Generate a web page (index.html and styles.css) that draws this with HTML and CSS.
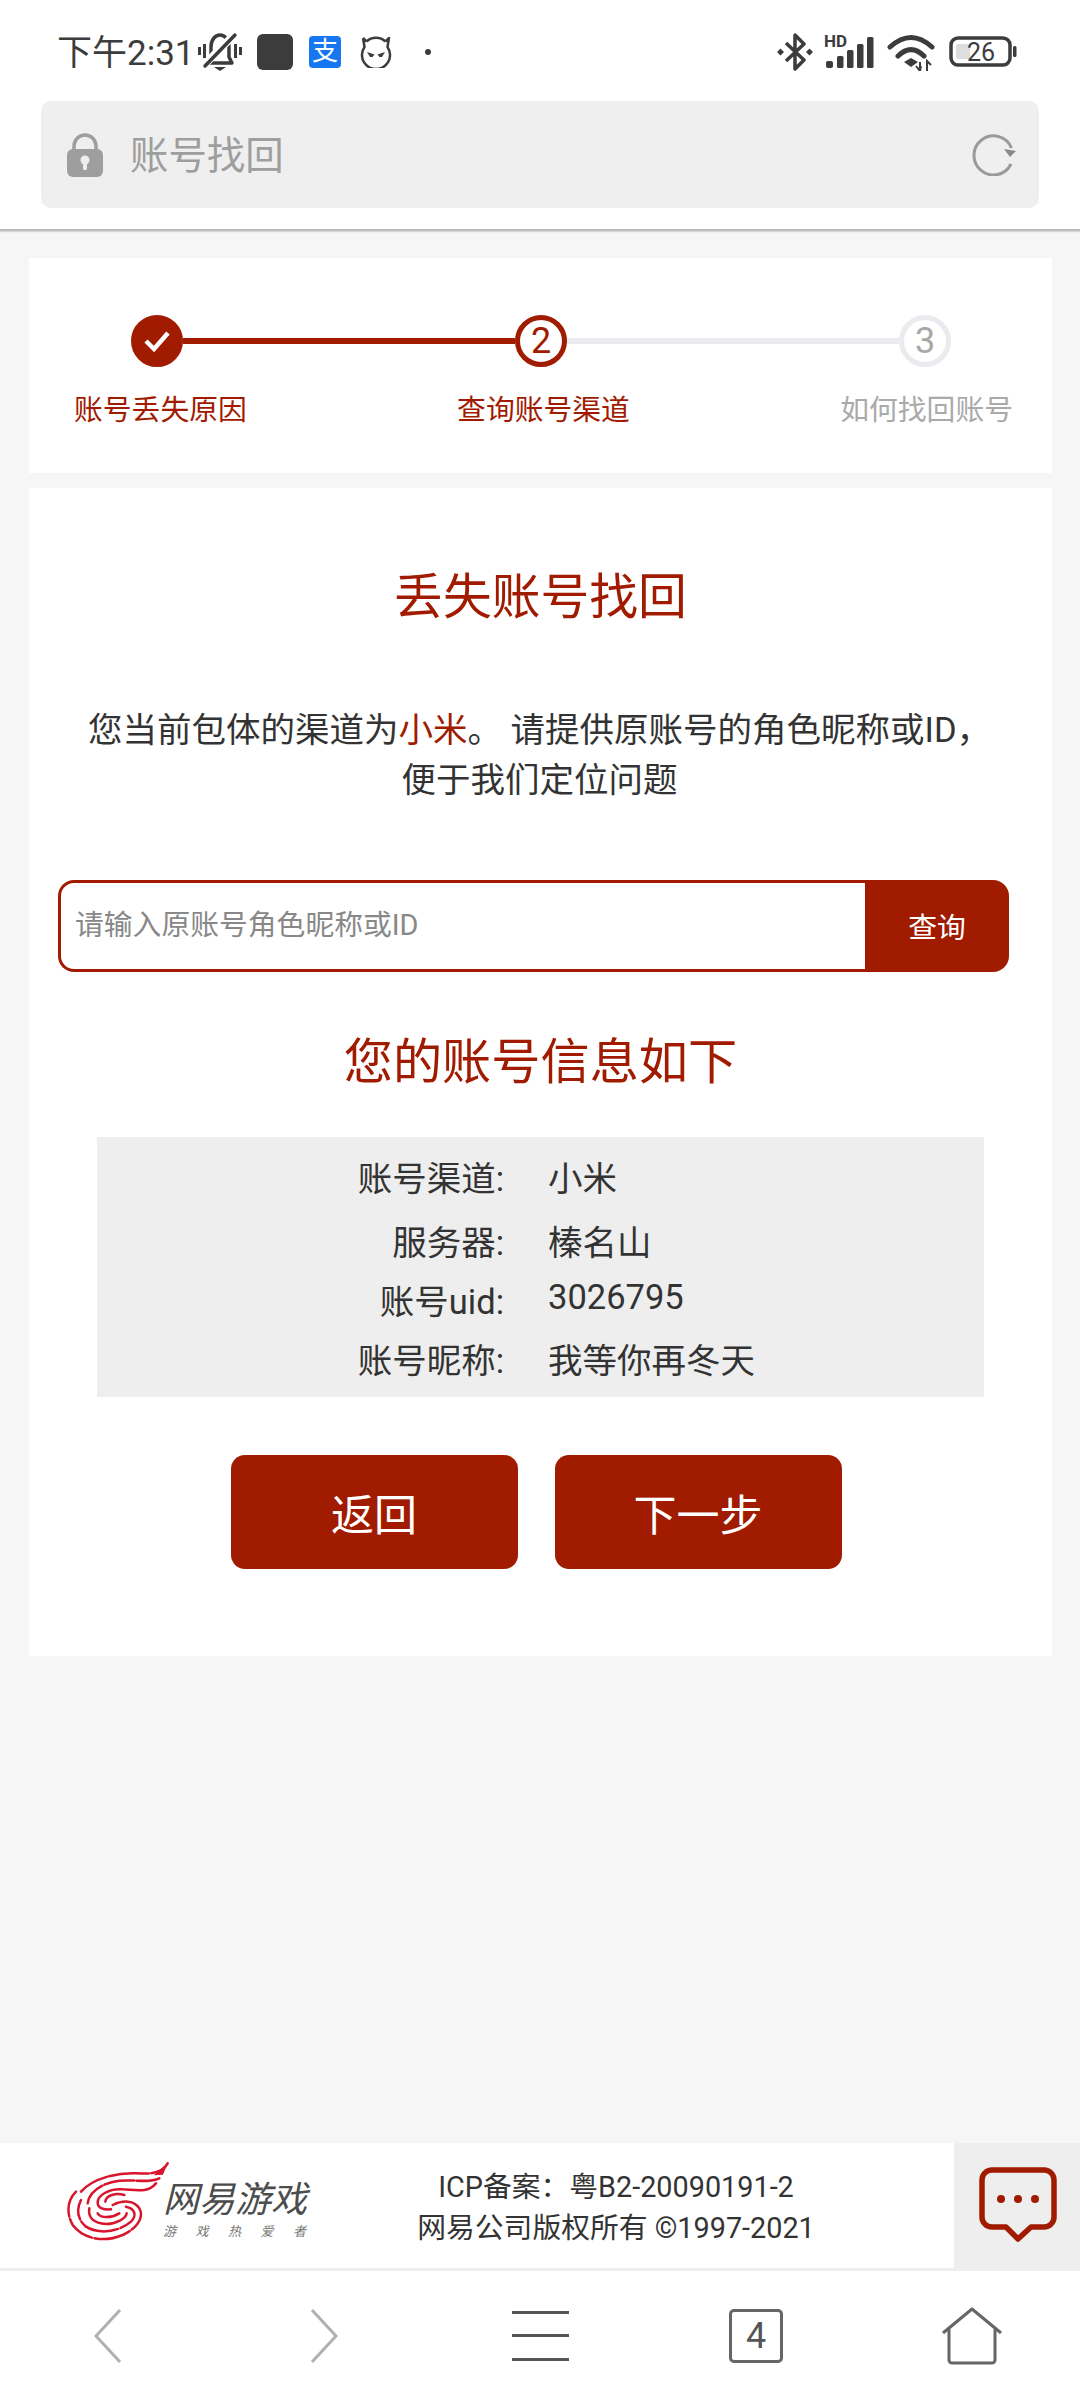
FILE: index.html
```html
<!DOCTYPE html>
<html lang="zh-CN">
<head>
<meta charset="utf-8">
<title>账号找回</title>
<link rel="stylesheet" href="styles.css">
</head>
<body>
<div class="page">
  <header class="header">
    <div class="status">
      <div class="status-left">
        <span class="time">下午2:31</span>
        <svg class="i-bell" viewBox="0 0 44 40"><g fill="none" stroke="#3c3c3c" stroke-width="3.5" stroke-linejoin="round"><path d="M10 31l3-6V15C13 8 17 3 22 3s9 5 9 12v10l3 6z"/></g><path d="M6 33L36 3" stroke="#fff" stroke-width="8"/><path d="M7 34L37 3" stroke="#3c3c3c" stroke-width="3.5" stroke-linecap="round"/><path d="M16 35h12l-6 4z" fill="#3c3c3c"/><path d="M1.500 15v8M6.500 12v14M37.500 12v14M42.500 15v8" stroke="#3c3c3c" stroke-width="3"/></svg>
        <span class="i-square"></span>
        <span class="i-alipay">支</span>
        <svg class="i-devil" viewBox="0 0 32 32"><path d="M3 2l1.500 9A14 14 0 1 0 27.500 11L29 2l-3.500 3.500M3 2l3.500 3.500" fill="none" stroke="#3c3c3c" stroke-width="2.500" stroke-linejoin="round"/><path d="M6.500 5.500a14 14 0 0 1 19 0" fill="none" stroke="#3c3c3c" stroke-width="2.500"/><path d="M7 16l7.500 2.500-2 2.500h-2.500zM25 16l-7.500 2.500 2 2.500h2.500z" fill="#3c3c3c"/></svg>
        <span class="i-dot"></span>
      </div>
      <div class="status-right">
        <svg class="i-bt" viewBox="0 0 36 38"><path d="M9 10l18 17-9 9V2l9 9L9 28" fill="none" stroke="#3c3c3c" stroke-width="3.500" stroke-linejoin="round"/><path d="M3.500 15.500l3.500 3.500-3.500 3.500L0 19zM32.500 15.500l3.500 3.500-3.500 3.500L29 19z" fill="#3c3c3c"/></svg>
        <svg class="i-signal" viewBox="0 0 50 40"><text x="0" y="15" class="hd">HD</text><rect x="2" y="29" width="7" height="7" rx="2" fill="#3c3c3c"/><rect x="13" y="24" width="6.500" height="12" rx="1.500" fill="#3c3c3c"/><rect x="23" y="18" width="6.500" height="18" rx="1.500" fill="#3c3c3c"/><rect x="33" y="12" width="6.500" height="24" rx="1.500" fill="#3c3c3c"/><rect x="43" y="5" width="6.500" height="31" rx="1.500" fill="#3c3c3c"/></svg>
        <svg class="i-wifi" viewBox="0 0 48 38"><path d="M3 14Q24-5 45 14M11 23Q24 10 37 23" fill="none" stroke="#3c3c3c" stroke-width="5" stroke-linecap="round"/><path d="M17 29l7-4 7 4-7 5z" fill="#3c3c3c"/><path d="M33 38V29M29 33l4 5 1-5M40 38V28l4 4" fill="none" stroke="#3c3c3c" stroke-width="2"/></svg>
        <svg class="i-battery" viewBox="0 0 68 32"><rect x="2" y="2" width="59" height="27" rx="7" fill="none" stroke="#3c3c3c" stroke-width="3.500"/><rect x="7" y="8" width="14" height="15" rx="2" fill="#dedede"/><text x="32" y="25" text-anchor="middle" class="batt">26</text><rect x="64" y="10" width="3.500" height="11" rx="1.500" fill="#3c3c3c"/></svg>
      </div>
    </div>
    <div class="address">
      <svg class="i-lock" viewBox="0 0 36 44"><path d="M7 20v-7a11 11 0 0 1 22 0v7" fill="none" stroke="#9e9e9e" stroke-width="3.500"/><rect y="16" width="36" height="28" rx="6" fill="#9e9e9e"/><circle cx="18" cy="27" r="4.500" fill="#eee"/><rect x="16" y="27" width="4" height="10" rx="1.500" fill="#eee"/></svg>
      <span class="address-text">账号找回</span>
      <svg class="i-reload" viewBox="0 0 44 42"><path d="M39 30A19.500 19.500 0 1 1 39.500 14" fill="none" stroke="#9a9a9a" stroke-width="3"/><path d="M32 15l12 2-6 6z" fill="#8a8a8a"/></svg>
    </div>
  </header>

  <main class="content">
    <section class="steps">
      <div class="track">
        <span class="dot dot-done"><svg class="i-check" viewBox="0 0 28 24"><path d="M3 12l8 8L25 4" fill="none" stroke="#fff" stroke-width="4.500"/></svg></span>
        <span class="bar bar-on"></span>
        <span class="dot dot-now">2</span>
        <span class="bar"></span>
        <span class="dot dot-next">3</span>
      </div>
      <div class="labels">
        <span class="label label-on">账号丢失原因</span>
        <span class="label label-on">查询账号渠道</span>
        <span class="label">如何找回账号</span>
      </div>
    </section>

    <section class="card">
      <h1 class="title">丢失账号找回</h1>
      <p class="desc">您当前包体的渠道为<em class="hl">小米</em>。 请提供原账号的角色昵称或ID，<br>便于我们定位问题</p>
      <form class="search">
        <input class="search-input" type="text" placeholder="请输入原账号角色昵称或ID">
        <button class="search-btn" type="button">查询</button>
      </form>
      <h2 class="subtitle">您的账号信息如下</h2>
      <dl class="info">
        <div class="info-row"><dt>账号渠道:</dt><dd>小米</dd></div>
        <div class="info-row"><dt>服务器:</dt><dd>榛名山</dd></div>
        <div class="info-row info-num"><dt>账号uid:</dt><dd>3026795</dd></div>
        <div class="info-row"><dt>账号昵称:</dt><dd>我等你再冬天</dd></div>
      </dl>
      <div class="actions">
        <button class="action" type="button">返回</button>
        <button class="action" type="button">下一步</button>
      </div>
    </section>
  </main>

  <footer class="footer">
    <div class="logo">
      <svg class="logo-mark" viewBox="0 0 104 84"><g transform="translate(-9 -12) scale(.3333)" fill="none" stroke="#d8152c" stroke-width="7.500" stroke-linecap="round">
        <path d="M335 40C318 72 280 72 240 70 180 68 110 85 75 125" stroke-dasharray="60 7 120 7 200 0"/>
        <path d="M310 85C280 100 240 88 190 92 140 98 100 125 95 160" stroke-dasharray="70 7 90 7 200 0"/>
        <path d="M300 100C275 130 240 120 200 118 160 115 125 135 125 158 125 175 145 180 165 178"/>
        <path d="M148 155C150 135 180 128 205 135"/>
        <path d="M60 125C35 150 30 190 50 225 80 265 140 280 200 255 245 235 265 200 250 175 235 150 200 150 170 165" stroke-dasharray="80 8 90 8 110 8 300 0"/>
        <path d="M75 150C60 180 65 210 90 230 130 255 190 245 225 215 245 195 235 175 210 170" stroke-dasharray="60 8 120 8 300 0"/>
        <path d="M100 175C95 205 115 220 150 222 180 222 210 205 212 190"/>
        <path d="M125 190C135 205 165 205 190 190"/>
        <path d="M335 40l-14 34-28 2z" fill="#d8152c" stroke="none"/>
      </g></svg>
      <div class="logo-text">
        <span class="logo-name">网易游戏</span>
        <span class="logo-sub"><i>游</i><i>戏</i><i>热</i><i>爱</i><i>者</i></span>
      </div>
    </div>
    <div class="copy">
      <p>ICP备案：粤B2-20090191-2</p>
      <p>网易公司版权所有 ©1997-2021</p>
    </div>
    <div class="chat">
      <svg class="i-chat" viewBox="0 0 78 75"><path d="M13 3h52a10 10 0 0 1 10 10v37a10 10 0 0 1-10 10H52L39 72 27 60H13A10 10 0 0 1 3 50V13A10 10 0 0 1 13 3z" fill="none" stroke="#a11b00" stroke-width="5.500" stroke-linejoin="round"/><circle cx="22" cy="32" r="4" fill="#a11b00"/><circle cx="39" cy="32" r="4" fill="#a11b00"/><circle cx="56" cy="32" r="4" fill="#a11b00"/></svg>
    </div>
  </footer>

  <nav class="nav">
    <svg class="i-chev" viewBox="0 0 28 54"><path d="M26 1L2 27l24 26" fill="none" stroke="#b0b0b0" stroke-width="3"/></svg>
    <svg class="i-chev" viewBox="0 0 28 54"><path d="M2 1l24 26L2 53" fill="none" stroke="#b0b0b0" stroke-width="3"/></svg>
    <span class="menu"><i></i><i></i><i></i></span>
    <span class="tabs">4</span>
    <svg class="i-home" viewBox="0 0 62 58"><path d="M2 26L31 2l29 24M8 22v31a3 3 0 0 0 3 3h40a3 3 0 0 0 3-3V22" fill="none" stroke="#666" stroke-width="3" stroke-linejoin="round"/></svg>
  </nav>
</div>
</body>
</html>
```
FILE: styles.css
```css
* { box-sizing: border-box; }
html, body { margin: 0; padding: 0; }
body {
  font-family: Roboto, "Noto Sans CJK SC", sans-serif;
  color: #333;
  background: #f6f6f6;
}
p, h1, h2, dl, dd { margin: 0; }
.page { width: 1080px; height: 2400px; display: flex; flex-direction: column; }

/* header */
.header { background: #fff; height: 231px; border-bottom: 2px solid #bdbdbd; box-shadow: 0 1px 1px #d8d8d8; }
.status { height: 101px; padding: 3px 63px 0 57px; display: flex; justify-content: space-between; align-items: center; }
.status-left, .status-right { display: flex; align-items: center; }
.time { font-size: 35px; color: #3c3c3c; width: 141px; white-space: nowrap; line-height: 40px; padding-top: 3px; height: 43px; }
.i-bell { width: 44px; height: 40px; }
.i-square { width: 36px; height: 36px; background: #3c3c3c; border-radius: 6px; margin-left: 15px; }
.i-alipay { width: 32px; height: 32px; background: #1677f0; border-radius: 4px; margin-left: 16px; color: #fff; font-size: 26px; line-height: 31px; text-align: center; }
.i-devil { width: 32px; height: 32px; margin-left: 19px; }
.i-dot { width: 6px; height: 6px; border-radius: 50%; background: #3c3c3c; margin-left: 33px; }
.i-bt { width: 36px; height: 38px; }
.i-signal { width: 50px; height: 40px; margin-left: 11px; }
.hd { font: 700 17px Roboto, sans-serif; fill: #3c3c3c; }
.i-wifi { width: 48px; height: 38px; margin-left: 13px; }
.i-battery { width: 68px; height: 32px; margin-left: 14px; }
.batt { font: 400 25px Roboto, sans-serif; fill: #3c3c3c; }
.address { margin: 0 41px 0 41px; height: 107px; background: #efefef; border-radius: 10px; display: flex; align-items: center; padding: 0 23px 0 26px; }
.i-lock { width: 36px; height: 44px; }
.address-text { font-size: 38.400px; line-height: 44px; color: #9e9e9e; margin: 2px 0 0 27px; flex: 1; }
.i-reload { width: 44px; height: 42px; }

/* content */
.content { flex: 1; padding: 27px 28px 0 29px; display: flex; flex-direction: column; gap: 15px; }
.steps { background: #fff; height: 215px; padding-top: 57px; }
.track { display: flex; align-items: center; padding: 0 101px 0 102px; }
.dot { flex: none; width: 52px; height: 52px; border-radius: 50%; display: flex; align-items: center; justify-content: center; font-size: 36px; border: 5px solid; line-height: 1; }
.dot-done { background: #a11b00; border-color: #a11b00; }
.i-check { width: 28px; height: 24px; }
.dot-now { border-color: #a11b00; color: #a11b00; }
.dot-next { border-color: #ebebef; color: #a8a8a8; }
.bar { flex: 1; height: 6px; background: #ebebef; }
.bar-on { background: #a11b00; }
.labels { display: flex; justify-content: space-between; padding: 22px 39px 0 45px; }
.label { font-size: 28.800px; line-height: 42px; color: #aaa; white-space: nowrap; }
.label-on { color: #a11b00; }

.card { background: #fff; height: 1168px; padding-top: 80px; }
.title { font-size: 48.800px; font-weight: 400; line-height: 60px; color: #a11b00; text-align: center; }
.desc { margin-top: 77px; font-size: 34.500px; line-height: 50px; text-align: center; color: #333; padding-right: 2px; }
.hl { font-style: normal; color: #a11b00; }
.search { display: flex; margin: 75px 43px 0 29px; height: 92px; }
.search-input { flex: 1; min-width: 0; border: 3px solid #a11b00; border-right: 0; border-radius: 16px 0 0 16px; padding: 0 14px 2px; font: 400 28.800px Roboto, "Noto Sans CJK SC", sans-serif; color: #333; background: #fff; outline: none; }
.search-input::placeholder { color: #888; opacity: 1; }
.search-btn { width: 144px; border: 0; border-radius: 0 16px 16px 0; background: #a11b00; color: #fff; font: 400 28.800px Roboto, "Noto Sans CJK SC", sans-serif; padding: 0 0 2px 0; }
.subtitle { margin-top: 60px; font-size: 49.200px; font-weight: 400; line-height: 60px; color: #a11b00; text-align: center; }
.info { margin: 45px 68px 0 68px; height: 260px; background: #eee; padding-top: 17px; }
.info-row { display: grid; grid-template-columns: 407px 1fr; column-gap: 44px; font-size: 34.500px; line-height: 50px; color: #333; }
.info-row + .info-row { margin-top: 14px; }
.info-row.info-num { margin-top: 9px; }
.info-row.info-num + .info-row { margin-top: 9px; }
.info-row dt { text-align: right; }
.info-num dd { transform: translateY(-5px); }
.actions { display: flex; justify-content: center; gap: 37px; margin-top: 58px; padding-right: 9px; }
.action { width: 287px; height: 114px; border: 0; border-radius: 14px; background: #a11b00; color: #fff; font: 400 43px Roboto, "Noto Sans CJK SC", sans-serif; padding: 0; }

/* footer */
.footer { height: 128px; background: #fff; border-bottom: 3px solid #eee; display: flex; }
.logo { width: 278px; flex: none; display: flex; padding: 19px 0 0 65px; }
.logo-mark { width: 104px; height: 84px; flex: none; }
.logo-text { width: 143px; margin-left: -6px; padding-top: 17px; display: flex; flex-direction: column; }
.logo-name { font-size: 36px; line-height: 42px; font-style: italic; font-weight: 400; color: #4c4c4c; white-space: nowrap; }
.logo-sub { display: flex; justify-content: space-between; font-size: 13px; line-height: 18px; color: #777; margin-top: 2px; }
.logo-sub i { font-style: italic; }
.copy { flex: 1; text-align: center; padding-top: 24px; font-size: 28.800px; line-height: 41px; color: #333; white-space: nowrap; }
.chat { width: 126px; flex: none; background: #eee; display: flex; padding: 24px 0 0 25px; }
.i-chat { width: 78px; height: 75px; }

/* bottom nav */
.nav { height: 129px; background: #fff; display: grid; grid-template-columns: repeat(5, 216px); justify-items: center; align-items: center; }
.i-chev { width: 28px; height: 54px; }
.menu { width: 57px; height: 50px; display: flex; flex-direction: column; justify-content: space-between; }
.menu i { display: block; height: 3px; background: #555; }
.tabs { width: 54px; height: 54px; border: 3px solid #666; border-radius: 5px; display: flex; align-items: center; justify-content: center; font-size: 36px; line-height: 1; color: #555; }
.i-home { width: 62px; height: 58px; }
```
